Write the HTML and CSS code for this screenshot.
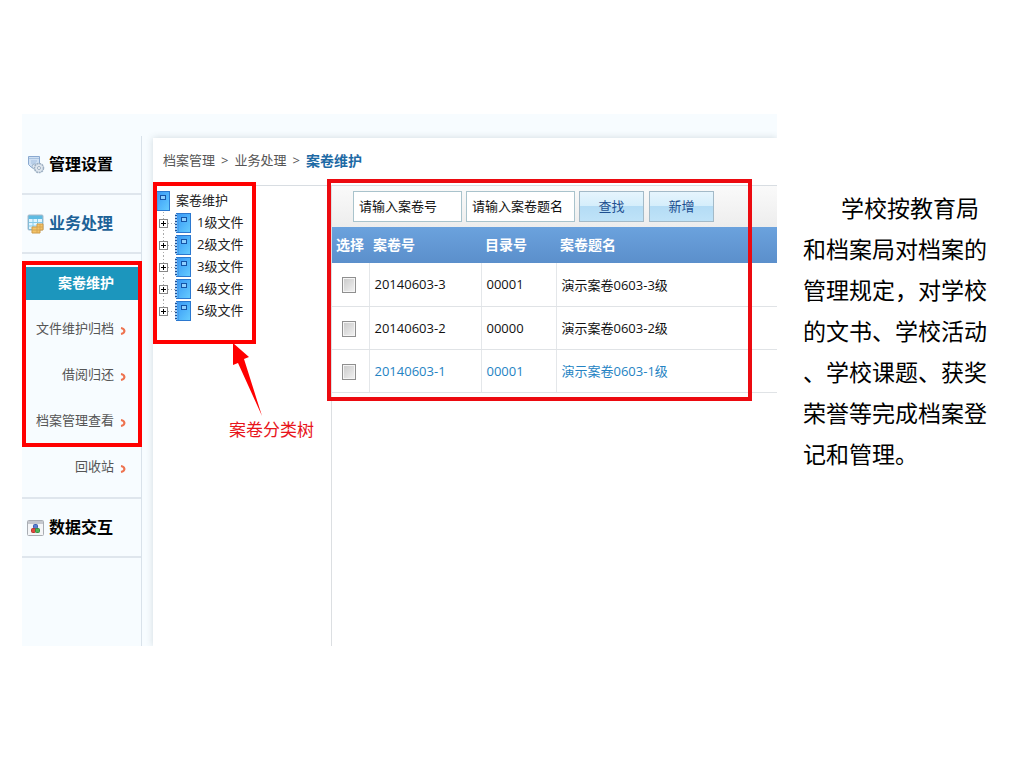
FILE: index.html
```
<!DOCTYPE html>
<html lang="zh-CN">
<head>
    <meta charset="UTF-8">
    <title>案卷维护</title>
    <link rel="stylesheet" href="styles.css">
</head>
<body>
    <!-- Shared icons -->
    <svg class="defs" width="0" height="0">
        <defs>
            <linearGradient id="blue" x1="0" y1="0" x2="1" y2="1">
                <stop offset="0" stop-color="#3595f5"/>
                <stop offset="1" stop-color="#66cdff"/>
            </linearGradient>
            <symbol id="book" viewBox="0 0 16 20">
                <rect x="1.5" y=".5" width="14" height="19" fill="url(#blue)" stroke="#2b78cf"/>
                <path d="M1 1v18" stroke="#a9cdf2" stroke-width="2"/>
                <path d="M1 2v17" stroke="#1f4f94" stroke-width="2" stroke-dasharray="1 2"/>
                <path d="M3.500 1v18" stroke="#4a9ce8"/>
                <rect x="6.500" y="4.500" width="5" height="4" fill="#8fd0ff" stroke="#1553a5"/>
            </symbol>
        </defs>
    </svg>

    <div class="slide">
        <div class="app">
            <!-- Left menu -->
            <nav class="sidebar">
                <a class="menu" href="#">
                    <svg width="18" height="20" viewBox="0 0 18 20">
                        <path d="M1.500 1.500h11v11h-8l-3-3z" fill="#cfe0f3" stroke="#8aa9d0"/>
                        <path d="M2 3.500h10" stroke="#a9c3e0"/>
                        <path d="M4 6h6M4 8h5" stroke="#a4bfdf"/>
                        <circle cx="7.500" cy="11.500" r="2.500" fill="#dfe8f1" stroke="#9db3ca"/>
                        <circle cx="12" cy="13" r="4.500" fill="#dfe7ef" stroke="#9dafc2" stroke-width="1.500" stroke-dasharray="2 .6"/>
                        <circle cx="12" cy="13" r="1.500" fill="#fff" stroke="#9dafc2"/>
                    </svg>
                    <span>管理设置</span>
                </a>
                <a class="menu open" href="#">
                    <svg width="18" height="20" viewBox="0 0 18 20">
                        <rect x="1" y="1" width="15" height="15" rx="1" fill="#5fbbe2" stroke="#a9bac8"/>
                        <rect x="2" y="5" width="13" height="10" fill="#dff4ff"/>
                        <path d="M2 8.500h13M2 12h13M6 5v10M10.500 5v10" stroke="#86cbe8"/>
                        <path d="M5 13h5v-3h6v6h-3v3H5z" fill="#f3c468" stroke="#cf9b48"/>
                        <path d="M5 16h8M10 13v6M10 13h6M13 10v6" stroke="#d8a552" fill="none"/>
                    </svg>
                    <span>业务处理</span>
                </a>
                <div class="submenu">
                    <div class="marked">
                        <a class="sub current" href="#">案卷维护</a>
                        <a class="sub" href="#">文件维护归档<svg class="chevron" viewBox="0 0 6 8"><path d="M1 1q3 .5 3.500 3q-.5 2.500-3.500 3"/></svg></a>
                        <a class="sub" href="#">借阅归还<svg class="chevron" viewBox="0 0 6 8"><path d="M1 1q3 .5 3.500 3q-.5 2.500-3.500 3"/></svg></a>
                        <a class="sub" href="#">档案管理查看<svg class="chevron" viewBox="0 0 6 8"><path d="M1 1q3 .5 3.500 3q-.5 2.500-3.500 3"/></svg></a>
                        <div class="mark mark-menu"></div>
                    </div>
                    <a class="sub" href="#">回收站<svg class="chevron" viewBox="0 0 6 8"><path d="M1 1q3 .5 3.500 3q-.5 2.500-3.500 3"/></svg></a>
                </div>
                <a class="menu" href="#">
                    <svg width="18" height="20" viewBox="0 0 18 20">
                        <rect x=".5" y="2.500" width="16" height="15" rx="1" fill="#f4f5f7" stroke="#a9adb3"/>
                        <path d="M1 4.500h15" stroke="#c5c8ce" stroke-width="3"/>
                        <rect x="6.500" y="6.500" width="4" height="4" rx="1" fill="#5a7fd0" stroke="#3a5fb0"/>
                        <rect x="4.500" y="10.500" width="4" height="4" rx="1" fill="#e0483e" stroke="#b7362d"/>
                        <rect x="8.500" y="10.500" width="4" height="4" rx="1" fill="#4fb559" stroke="#368a40"/>
                    </svg>
                    <span>数据交互</span>
                </a>
            </nav>

            <main class="content">
                <div class="crumbs">
                    <a href="#">档案管理</a><span>&gt;</span><a href="#">业务处理</a><span>&gt;</span><b>案卷维护</b>
                </div>
                <div class="panes">
                    <!-- Category tree -->
                    <div class="tree">
                        <div class="root"><svg class="book"><use href="#book"/></svg><span>案卷维护</span></div>
                        <ul>
                            <li><button class="plus" aria-label="展开"></button><svg class="book"><use href="#book"/></svg><span>1级文件</span></li>
                            <li><button class="plus" aria-label="展开"></button><svg class="book"><use href="#book"/></svg><span>2级文件</span></li>
                            <li><button class="plus" aria-label="展开"></button><svg class="book"><use href="#book"/></svg><span>3级文件</span></li>
                            <li><button class="plus" aria-label="展开"></button><svg class="book"><use href="#book"/></svg><span>4级文件</span></li>
                            <li><button class="plus" aria-label="展开"></button><svg class="book"><use href="#book"/></svg><span>5级文件</span></li>
                        </ul>
                        <div class="mark mark-tree"></div>
                        <div class="note">
                            <svg width="32" height="74" viewBox="0 0 32 74">
                                <path d="M0 0L16 14L11 16L29 73L5 20L0 22z" fill="#f00"/>
                            </svg>
                            <span>案卷分类树</span>
                        </div>
                    </div>

                    <!-- Search and list -->
                    <div class="list">
                        <form class="toolbar">
                            <input type="text" value="请输入案卷号" aria-label="案卷号">
                            <input type="text" value="请输入案卷题名" aria-label="案卷题名">
                            <button type="button">查找</button>
                            <button type="button">新增</button>
                        </form>
                        <table>
                            <thead>
                                <tr><th class="pick">选择</th><th class="num">案卷号</th><th class="dir">目录号</th><th>案卷题名</th></tr>
                            </thead>
                            <tbody>
                                <tr><td><input type="checkbox" aria-label="20140603-3"></td><td>20140603-3</td><td>00001</td><td>演示案卷0603-3级</td></tr>
                                <tr><td><input type="checkbox" aria-label="20140603-2"></td><td>20140603-2</td><td>00000</td><td>演示案卷0603-2级</td></tr>
                                <tr class="active"><td><input type="checkbox" aria-label="20140603-1"></td><td>20140603-1</td><td>00001</td><td>演示案卷0603-1级</td></tr>
                            </tbody>
                        </table>
                        <div class="mark mark-list"></div>
                    </div>
                </div>
            </main>
        </div>

        <p class="text">学校按教育局<br>和档案局对档案的<br>管理规定，对学校<br>的文书、学校活动<br>、学校课题、获奖<br>荣誉等完成档案登<br>记和管理。</p>
    </div>
</body>
</html>
```
FILE: styles.css
```
* {
    box-sizing: border-box;
}

body {
    margin: 0;
    background: #fff;
    font-family: "Open Sans", "Noto Sans CJK SC", sans-serif;
    font-size: 13px;
    color: #111;
}

a {
    color: inherit;
    text-decoration: none;
}

.defs {
    position: absolute;
}

.slide {
    display: grid;
    grid-template-columns: minmax(0, 1fr) 186px;
    column-gap: 26px;
    padding: 114px 35px 0 22px;
}

.app {
    display: flex;
    min-height: 532px;
    padding-top: 22px;
    background: #f7fcff;
    overflow: hidden;
}

/* Left menu */
.sidebar {
    flex: 0 0 120px;
    border-right: 1px solid #d9e2ea;
}

.menu {
    display: flex;
    align-items: center;
    gap: 4px;
    height: 59px;
    padding-left: 5px;
    border-bottom: 2px solid #dfe6ed;
    font-size: 16px;
    font-weight: bold;
    color: #000;
    white-space: nowrap;
}

.menu span,
.tree span {
    padding-bottom: 3px;
}

.menu.open {
    color: #1d6297;
}

.submenu {
    padding: 13px 0 7px;
    border-bottom: 2px solid #dfe6ed;
}

.marked {
    position: relative;
}

.sub {
    display: flex;
    align-items: center;
    justify-content: flex-end;
    gap: 6px;
    height: 46px;
    padding: 0 15px 4px 0;
    color: #555;
}

.sub.current {
    height: 33px;
    margin-bottom: 6px;
    padding-right: 27px;
    background: #1c96bd;
    font-size: 14px;
    font-weight: bold;
    color: #fff;
}

.chevron {
    width: 6px;
    height: 8px;
    margin-top: 7px;
    fill: none;
    stroke: #ee7350;
    stroke-width: 2;
}

/* Red frames over the screen */
.mark {
    position: absolute;
    border: 4px solid #f00;
    pointer-events: none;
}

.mark-menu {
    top: -6px;
    bottom: -3px;
    left: 0;
    right: -1px;
}

.mark-tree {
    top: -4px;
    left: 0;
    width: 103px;
    height: 162px;
}

.mark-list {
    top: -7px;
    bottom: -8px;
    left: -5px;
    right: 25px;
    border-color: #ec0a10;
}

/* Right part */
.content {
    display: flex;
    flex-direction: column;
    flex: 1;
    min-width: 0;
    margin: 2px 0 0 11px;
    background: #fff;
    box-shadow: 0 0 7px rgba(60, 80, 90, 0.2);
}

.crumbs {
    display: flex;
    align-items: center;
    gap: 6px;
    height: 48px;
    padding: 0 0 4px 10px;
    border-bottom: 1px solid #d8dde2;
    color: #555;
}

.crumbs b {
    font-size: 14px;
    color: #1d6aa5;
}

.panes {
    display: flex;
    flex: 1;
}

.tree {
    position: relative;
    flex: 0 0 179px;
    padding-top: 4px;
    border-right: 1px solid #dcdfe2;
    color: #222;
}

.tree ul {
    margin: 0;
    padding: 0 0 0 6px;
    list-style: none;
}

.root,
.tree li {
    display: flex;
    align-items: center;
    height: 22px;
    padding-left: 1px;
}

/* dotted lines between the nodes */
.tree li {
    padding-left: 0;
    background: repeating-linear-gradient(#aaa 0 1px, #fff 1px 3px) 4px 0 / 1px 100% no-repeat,
        repeating-linear-gradient(90deg, #aaa 0 1px, #fff 1px 3px) 9px 11px / 8px 1px no-repeat;
}

.tree li:last-child {
    background-size: 1px 50%, 8px 1px;
}

.book {
    width: 16px;
    height: 20px;
    margin-right: 6px;
}

.plus {
    width: 9px;
    height: 9px;
    margin: 0 7px 0 0;
    padding: 0;
    border: 1px solid #888;
    background: linear-gradient(#000, #000) center / 5px 1px no-repeat,
        linear-gradient(#000, #000) center / 1px 5px no-repeat, #fff;
}

.note {
    position: absolute;
    top: 157px;
    left: 76px;
    font-size: 17px;
    line-height: 26px;
    color: #e8151b;
    white-space: nowrap;
}

.note svg {
    display: block;
    margin-left: 4px;
}

.list {
    position: relative;
    flex: 1;
    align-self: flex-start;
    min-width: 0;
}

.toolbar {
    display: flex;
    align-items: center;
    gap: 4px;
    height: 41px;
    padding-left: 21px;
    background: linear-gradient(#fafafa, #ededed);
}

.toolbar input {
    width: 109px;
    height: 31px;
    padding: 0 5px 2px;
    border: 1px solid #a9c3cc;
    background: #fff;
    font: inherit;
    color: #111;
}

.toolbar button {
    width: 65px;
    height: 31px;
    margin-right: 1px;
    padding: 0 0 2px;
    border: 1px solid #a3bac8;
    background: linear-gradient(#e6f5fd 0, #d5eefb 48%, #b4dcf5 50%, #bfe3f8 100%);
    font: inherit;
    color: #1d4f90;
}

table {
    width: 100%;
    border-collapse: collapse;
    table-layout: fixed;
}

thead {
    background: linear-gradient(#6ba2dd, #5b8fcb);
}

th {
    height: 36px;
    padding: 0 4px 2px;
    font-size: 14px;
    text-align: left;
    white-space: nowrap;
    color: #fff;
}

.pick {
    width: 37px;
}

.num {
    width: 112px;
}

.dir {
    width: 75px;
}

td {
    height: 43px;
    padding: 0 5px;
    border-right: 1px solid #e4e7ea;
    border-bottom: 1px solid #e0e3e6;
}

td:first-child {
    padding: 0;
    text-align: center;
}

td:last-child {
    border-right: none;
}

td input {
    appearance: none;
    display: block;
    width: 14px;
    height: 16px;
    margin: 2px auto 0 10px;
    border: 1px solid #8f8f8f;
    background: linear-gradient(135deg, #c9c9c9, #f2f2f2);
    box-shadow: inset 0 0 0 1px #f5f5f5;
}

.active td {
    color: #2583c3;
}

/* Text beside the screen */
.text {
    margin: 74px 0 0;
    font-size: 23px;
    line-height: 41px;
    text-indent: 38px;
    white-space: nowrap;
    color: #000;
}
```
